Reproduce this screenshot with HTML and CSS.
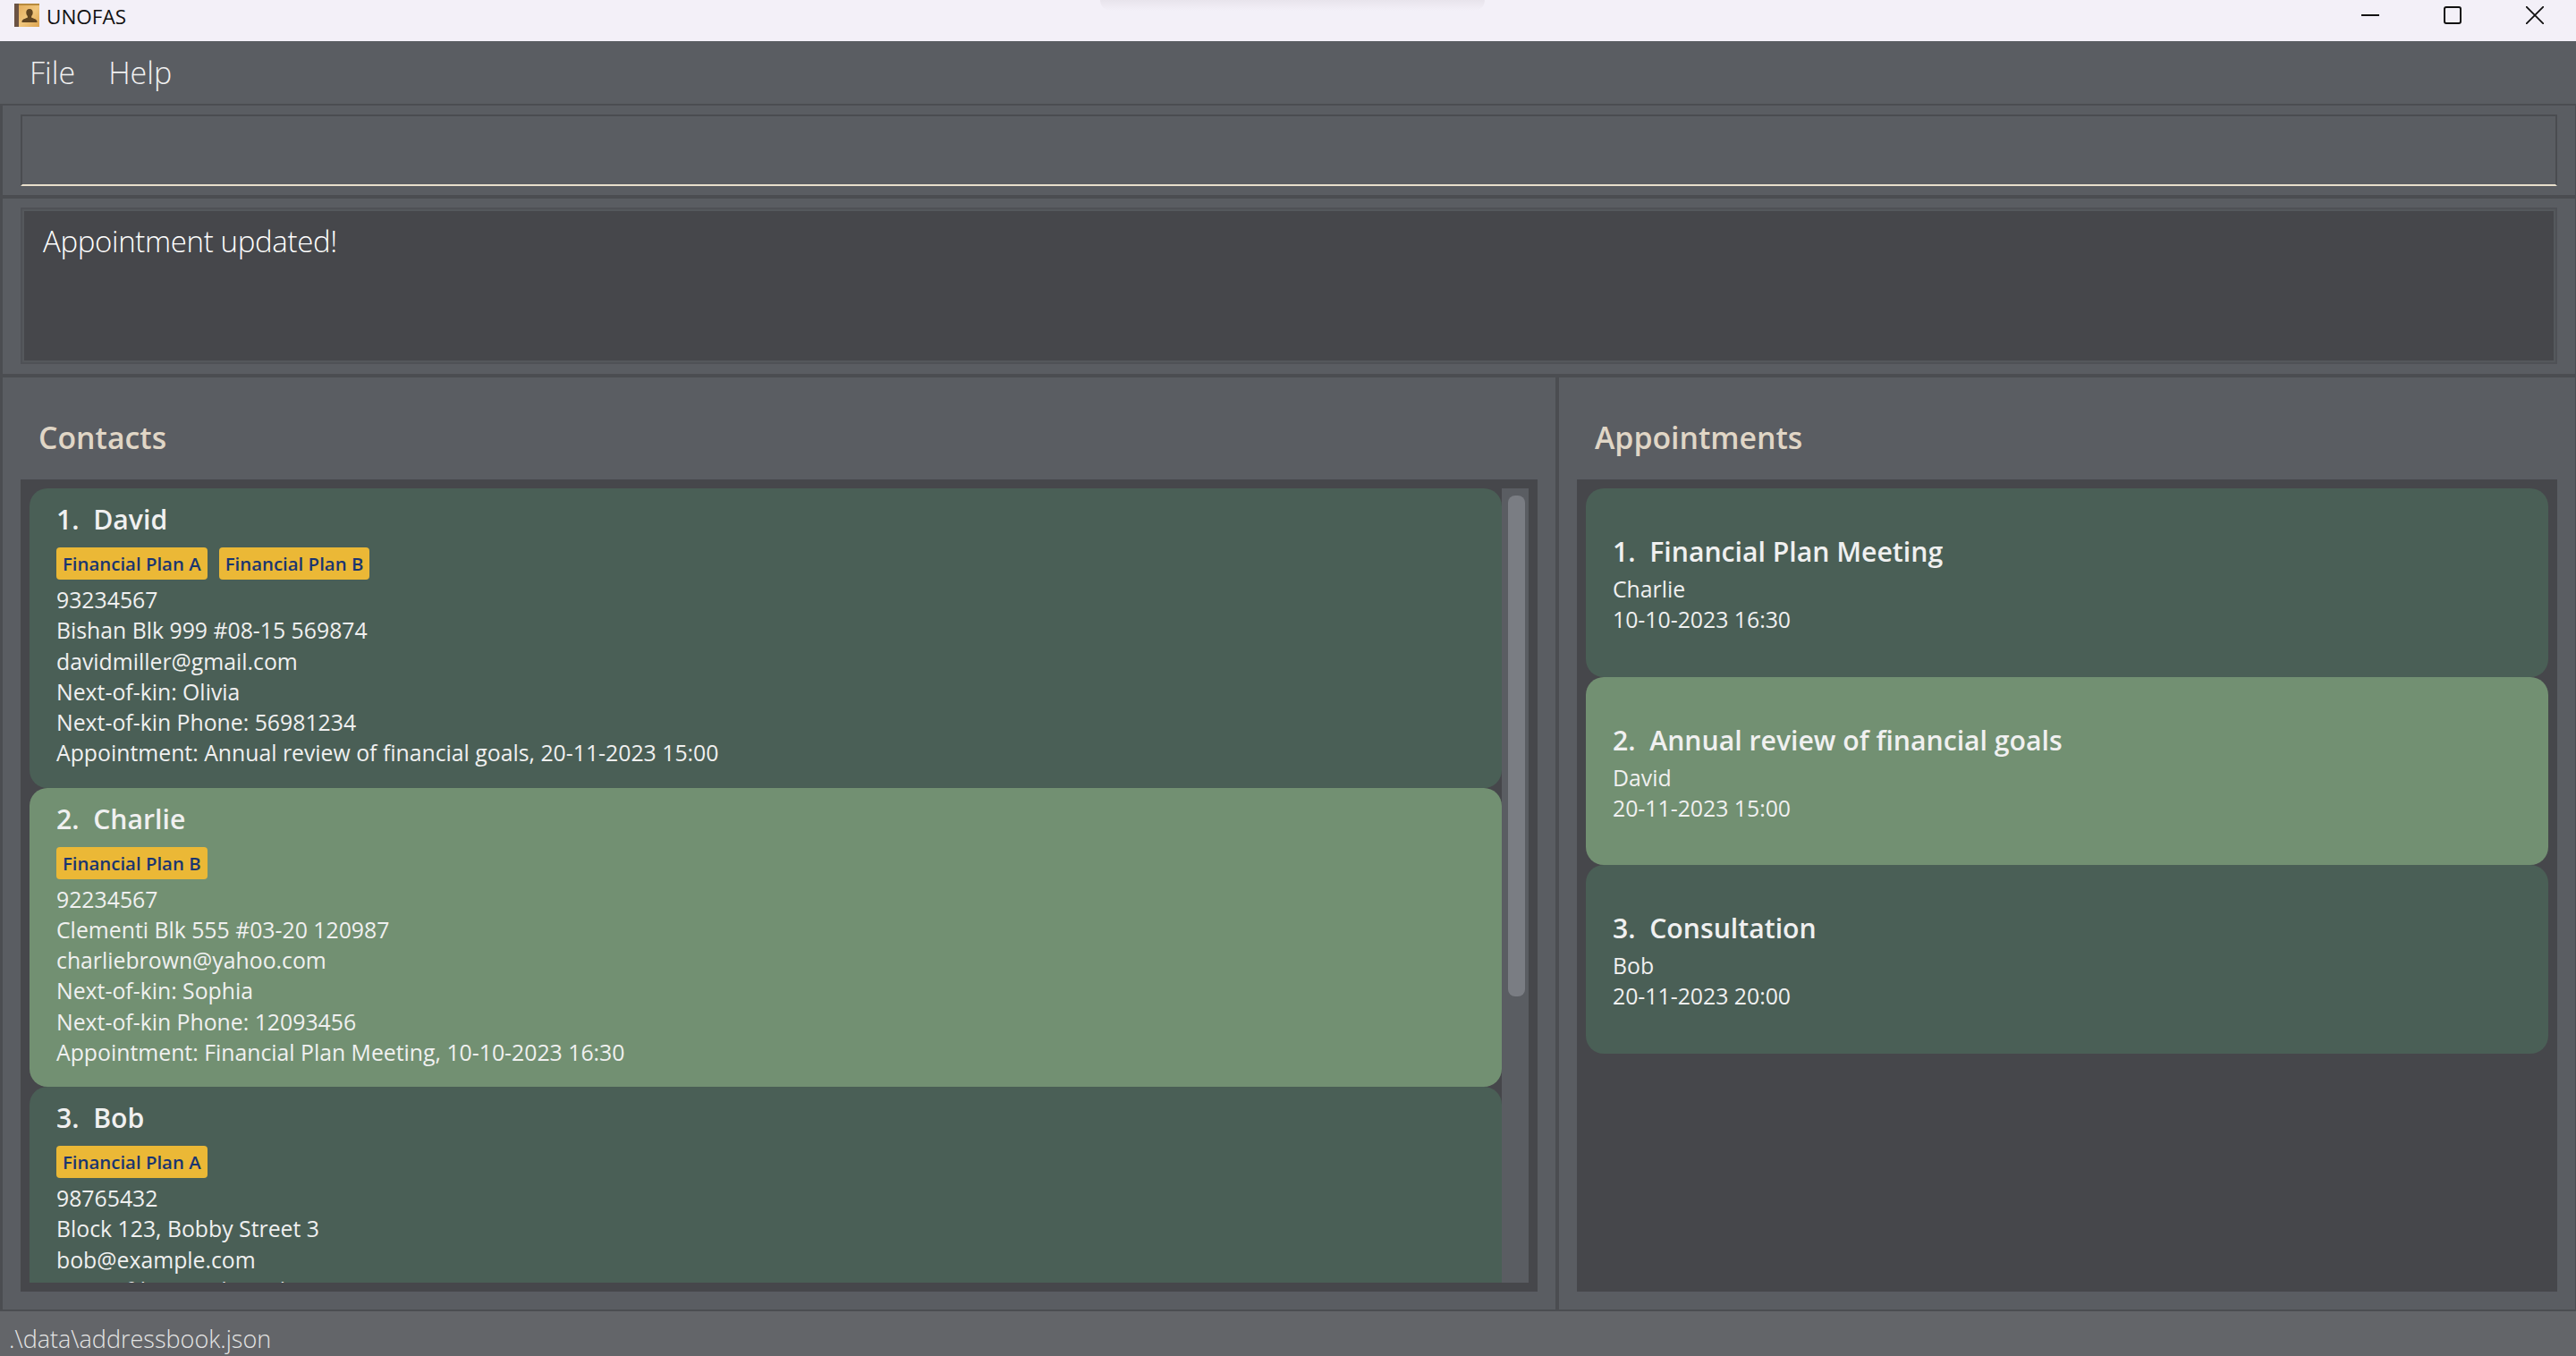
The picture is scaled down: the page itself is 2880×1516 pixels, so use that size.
FILE: index.html
```html
<!DOCTYPE html>
<html lang="en">
<head>
<meta charset="UTF-8" />
<title>UNOFAS</title>
<link rel="stylesheet" href="styles.css">
</head>
<body>
  <div class="titlebar">
    <svg class="app-icon" viewBox="0 0 28 26" width="28" height="26">
      <defs>
        <linearGradient id="cover" x1="0" y1="0" x2="1" y2="1">
          <stop offset="0" stop-color="#e3ad5c" />
          <stop offset="0.5" stop-color="#f0c67c" />
          <stop offset="1" stop-color="#dca34e" />
        </linearGradient>
      </defs>
      <rect x="0" y="0" width="28" height="26" fill="#b78a3c" />
      <rect x="0" y="0" width="5" height="26" fill="#6b5344" />
      <rect x="5" y="2" width="23" height="24" fill="url(#cover)" />
      <path d="M17 6c-2.600 0-3.900 2-3.700 4.300.1 1.600.7 2.900 1.500 3.700v1.800c-2.700 1-6.300 1.900-6.300 4.200v1h17v-1c0-2.300-3.600-3.200-6.300-4.200V14c.8-.8 1.400-2.100 1.500-3.700C20.900 8 19.600 6 17 6z" fill="#5f4420" />
    </svg>
    <span class="app-name">UNOFAS</span>
    <div class="window-btns">
      <div class="window-btn">
        <svg viewBox="0 0 20 20" width="20" height="20"><path d="M0 10h20" stroke="#111" stroke-width="2" fill="none" /></svg>
      </div>
      <div class="window-btn">
        <svg viewBox="0 0 20 20" width="20" height="20"><rect x="1" y="1" width="18" height="18" rx="2" stroke="#111" stroke-width="2" fill="none" /></svg>
      </div>
      <div class="window-btn">
        <svg viewBox="0 0 20 20" width="20" height="20"><path d="M0 0l20 20M20 0L0 20" stroke="#111" stroke-width="1.800" fill="none" /></svg>
      </div>
    </div>
    <div class="top-shadow"></div>
  </div>

  <div class="menubar">
    <span class="menu-item">File</span>
    <span class="menu-item">Help</span>
  </div>

  <div class="command-section">
    <div class="command-box"></div>
  </div>

  <div class="result-section">
    <div class="result-box">Appointment updated!</div>
  </div>

  <main class="panes">
    <section class="pane pane-contacts">
      <h2 class="pane-title">Contacts</h2>
      <div class="list">
        <div class="list-items">
          <article class="card person">
            <div class="card-name">1.&nbsp;&nbsp;David</div>
            <div class="tags"><span class="tag">Financial Plan A</span><span class="tag">Financial Plan B</span></div>
            <div class="line">93234567</div>
            <div class="line">Bishan Blk 999 #08-15 569874</div>
            <div class="line">davidmiller@gmail.com</div>
            <div class="line">Next-of-kin: Olivia</div>
            <div class="line">Next-of-kin Phone: 56981234</div>
            <div class="line">Appointment: Annual review of financial goals, 20-11-2023 15:00</div>
          </article>
          <article class="card person selected">
            <div class="card-name">2.&nbsp;&nbsp;Charlie</div>
            <div class="tags"><span class="tag">Financial Plan B</span></div>
            <div class="line">92234567</div>
            <div class="line">Clementi Blk 555 #03-20 120987</div>
            <div class="line">charliebrown@yahoo.com</div>
            <div class="line">Next-of-kin: Sophia</div>
            <div class="line">Next-of-kin Phone: 12093456</div>
            <div class="line">Appointment: Financial Plan Meeting, 10-10-2023 16:30</div>
          </article>
          <article class="card person">
            <div class="card-name">3.&nbsp;&nbsp;Bob</div>
            <div class="tags"><span class="tag">Financial Plan A</span></div>
            <div class="line">98765432</div>
            <div class="line">Block 123, Bobby Street 3</div>
            <div class="line">bob@example.com</div>
            <div class="line">Next-of-kin: Linda Park</div>
          </article>
        </div>
        <div class="scrollbar"><div class="thumb"></div></div>
      </div>
    </section>

    <section class="pane pane-appointments">
      <h2 class="pane-title">Appointments</h2>
      <div class="list">
        <div class="list-items">
          <article class="card appt">
            <div class="card-name">1.&nbsp;&nbsp;Financial Plan Meeting</div>
            <div class="line">Charlie</div>
            <div class="line">10-10-2023 16:30</div>
          </article>
          <article class="card appt selected">
            <div class="card-name">2.&nbsp;&nbsp;Annual review of financial goals</div>
            <div class="line">David</div>
            <div class="line">20-11-2023 15:00</div>
          </article>
          <article class="card appt">
            <div class="card-name">3.&nbsp;&nbsp;Consultation</div>
            <div class="line">Bob</div>
            <div class="line">20-11-2023 20:00</div>
          </article>
        </div>
      </div>
    </section>
  </main>

  <footer class="statusbar">.\data\addressbook.json</footer>
</body>
</html>
```

FILE: styles.css
```css
* {
  box-sizing: border-box;
}
html, body {
  height: 100%;
}
body {
  margin: 0;
  height: 1516px;
  display: flex;
  flex-direction: column;
  overflow: hidden;
  background: #4b4d51;
  font-family: "Open Sans", "Noto Sans", sans-serif;
  color: #f0f0f0;
}

/* window title */
.titlebar {
  position: relative;
  height: 46px;
  flex: none;
  display: flex;
  align-items: center;
  padding-left: 16px;
  background: #f3f0f8;
  color: #111;
}
.app-icon {
  margin-right: 8px;
  margin-top: -12px;
}
.app-name {
  font-size: 22.500px;
  margin-top: -9px;
}
.window-btns {
  margin-left: auto;
  display: flex;
  align-self: flex-start;
}
.window-btn {
  width: 92px;
  height: 34px;
  display: flex;
  align-items: center;
  justify-content: center;
}
.top-shadow {
  position: absolute;
  left: 1230px;
  top: 0;
  width: 430px;
  height: 12px;
  background: linear-gradient(#e8e4ec, #f3f0f8);
  border-radius: 0 0 30px 30px;
}

/* menu */
.menubar {
  height: 70px;
  flex: none;
  display: flex;
  align-items: center;
  gap: 37px;
  padding: 0 0 0 33px;
  background: #5a5d62;
  font-weight: 300;
  font-size: 34px;
}

.command-section {
  height: 100px;
  flex: none;
  margin: 2px 1px 4px 3px;
  padding: 10px 20px;
  background: #5a5d62;
}
.command-box {
  height: 80px;
  border: 2px solid #4a4c50;
  border-bottom-color: #e8dfcc;
}

.result-section {
  height: 196px;
  flex: none;
  margin: 0 1px 4px 3px;
  padding: 10px 20px 11px 20px;
  background: #5a5d62;
}
.result-box {
  height: 175px;
  border: 2px solid #4f5156;
  background: #46474b;
  box-shadow: inset 0 0 0 2px #55585c;
  padding: 14px 23px;
  font-size: 33px;
  letter-spacing: -0.350px;
  line-height: 44px;
  font-weight: 300;
  color: #fff;
}

.panes {
  height: 1042px;
  flex: none;
  display: flex;
  gap: 4px;
  margin: 0 1px 0 3px;
}
.pane {
  display: flex;
  flex-direction: column;
  padding: 0 20px 20px 20px;
  background: #5a5d62;
}
.pane-contacts {
  width: 1736px;
}
.pane-appointments {
  flex: 1;
}
.pane-title {
  margin: 0;
  height: 114px;
  padding: 45px 0 0 20px;
  font-size: 33.800px;
  line-height: 44px;
  font-weight: 600;
  color: #e0d6c6;
}
.list {
  height: 908px;
  display: flex;
  padding: 10px;
  background: #46474b;
}
.list-items {
  flex: 1;
  overflow: hidden;
}
.scrollbar {
  width: 30px;
  padding: 8px 4px 0 7px;
  background: #5a5d62;
}
.thumb {
  height: 560px;
  border-radius: 8px;
  background: #7a7d83;
}

/* cards */
.card {
  border-radius: 20px;
  background: #4a5f56;
  overflow: hidden;
}
.card.selected {
  background: #729072;
}
.person {
  height: 334.500px;
  padding: 16px 30px 0 30px;
}
.appt {
  height: 210.500px;
  padding: 51px 31px 0 30px;
}
.card-name {
  font-size: 30.200px;
  line-height: 38px;
  font-weight: 600;
}
.appt .card-name {
  line-height: 40px;
  margin-bottom: 4px;
}
.tags {
  display: flex;
  gap: 13px;
  margin: 12px 0 5px 0;
}
.tag {
  height: 36px;
  padding: 0 7px;
  border-radius: 4px;
  background: #ebb836;
  color: #1a3570;
  font-size: 20.400px;
  line-height: 36px;
  font-weight: 600;
}
.line {
  font-size: 24.800px;
  line-height: 34.300px;
  white-space: nowrap;
}

.statusbar {
  flex: 1;
  margin-top: 2px;
  padding: 14px 0 0 10px;
  background: #636569;
  font-size: 27px;
  line-height: 34px;
  font-weight: 300;
  color: #e4e4e4;
}
```
